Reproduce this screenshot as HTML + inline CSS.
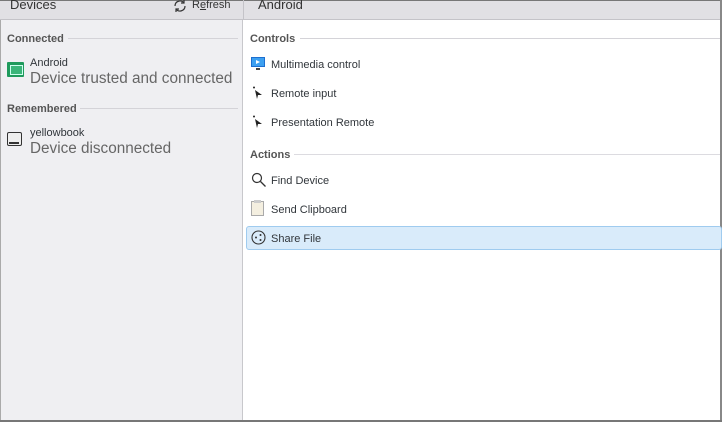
<!DOCTYPE html><html><head><style>
body{margin:0;width:722px;height:422px;overflow:hidden;font-family:"Liberation Sans","DejaVu Sans",sans-serif;color:#31363b;background:#fff;position:relative}
.a{position:absolute;white-space:nowrap}
.hdr{position:absolute;left:0;top:0;width:722px;height:20px;background:#e1e0e4;border-top:1px solid #777;border-bottom:1px solid #c4c3c8;box-sizing:border-box}
.left{position:absolute;left:0;top:20px;width:243px;height:402px;background:#efeff2;border-right:1px solid #c8c8cc;border-left:1px solid #aaa;box-sizing:border-box}
.sec{font-size:11px;font-weight:bold;color:#555}
.line{position:absolute;height:1px;background:#d4d3d8}
.it{font-size:11px;color:#31363b}
</style></head><body>
<div class="hdr"></div>
<div class="a" style="left:10px;top:-3px;font-size:13px;color:#333">Devices</div>
<svg class="a" style="left:173px;top:0" width="14" height="12" viewBox="0 0 14 12"><path d="M2 6a5 5 0 0 1 9-3M12 6a5 5 0 0 1-9 3" fill="none" stroke="#333" stroke-width="1.2"/><path d="M11 0v3h-3M3 12v-3h3" fill="none" stroke="#333" stroke-width="1.2"/></svg>
<div class="a" style="left:192px;top:-1px;font-size:11px;color:#333">R<u>e</u>fresh</div>
<div class="a" style="left:243px;top:0;width:1px;height:20px;background:#c4c3c8"></div>
<div class="a" style="left:258px;top:-3px;font-size:13px;color:#333">Android</div>
<div class="left"></div>
<div class="a" style="left:720px;top:0;width:2px;height:422px;background:#888"></div>
<div class="a" style="left:0;top:420px;width:722px;height:2px;background:#777"></div>
<div class="a sec" style="left:7px;top:33px">Connected</div>
<div class="line" style="left:68px;top:38px;width:170px"></div>
<div class="a" style="left:7px;top:62px;width:17px;height:15px;background:#1e9a5c;border-radius:1px"><div style="position:absolute;left:3px;top:3px;width:11px;height:8px;background:#39b579;border:1px solid #cfe"></div></div>
<div class="a it" style="left:30px;top:57px">Android</div>
<div class="a" style="left:30px;top:70px;font-size:15.3px;color:#666">Device trusted and connected</div>
<div class="a sec" style="left:7px;top:103px">Remembered</div>
<div class="line" style="left:80px;top:108px;width:158px"></div>
<div class="a" style="left:7px;top:132px;width:15px;height:14px;border:1.5px solid #333;border-radius:2px;box-sizing:border-box;background:#eee"><div style="position:absolute;left:1px;bottom:1px;width:10px;height:2px;background:#333"></div></div>
<div class="a it" style="left:30px;top:127px">yellowbook</div>
<div class="a" style="left:30px;top:140px;font-size:15.3px;color:#666">Device disconnected</div>

<div class="a sec" style="left:250px;top:33px">Controls</div>
<div class="line" style="left:300px;top:38px;width:420px"></div>
<svg class="a" style="left:250px;top:56px" width="16" height="16" viewBox="0 0 16 16"><rect x="1" y="1" width="14" height="10" fill="#1d6fd0"/><rect x="2" y="2" width="12" height="8" fill="#3da0f0"/><path d="M6 4l4 2-4 2z" fill="#fff"/><rect x="6" y="12" width="4" height="2" fill="#444"/></svg>
<div class="a it" style="left:271px;top:59px">Multimedia control</div>
<svg class="a" style="left:252px;top:86px" width="12" height="14"><circle cx="2" cy="1.5" r="1" fill="#222"/><path d="M3 4l7 5-4 0 -1 4z" fill="#222"/></svg>
<div class="a it" style="left:271px;top:88px">Remote input</div>
<svg class="a" style="left:252px;top:115px" width="12" height="14"><circle cx="2" cy="1.5" r="1" fill="#222"/><path d="M3 4l7 5-4 0 -1 4z" fill="#222"/></svg>
<div class="a it" style="left:271px;top:117px">Presentation Remote</div>
<div class="a sec" style="left:250px;top:149px">Actions</div>
<div class="line" style="left:294px;top:154px;width:426px;background:#dcdbe0"></div>
<svg class="a" style="left:251px;top:172px" width="16" height="16"><circle cx="6" cy="6" r="4.5" fill="none" stroke="#333" stroke-width="1.2"/><path d="M9.5 9.5l5 5" stroke="#333" stroke-width="1.3"/></svg>
<div class="a it" style="left:271px;top:175px">Find Device</div>
<div class="a" style="left:251px;top:201px;width:13px;height:15px;background:#f4efe0;border:1px solid #aaa;box-sizing:border-box"><div style="position:absolute;left:2px;top:-2px;width:7px;height:3px;background:#ccc"></div></div>
<div class="a it" style="left:271px;top:204px">Send Clipboard</div>
<div class="a" style="left:246px;top:226px;width:476px;height:24px;background:#d9ebfa;border:1px solid #9fcbef;border-radius:3px;box-sizing:border-box"></div>
<svg class="a" style="left:251px;top:230px" width="16" height="16"><circle cx="7.5" cy="7.5" r="6.5" fill="none" stroke="#333" stroke-width="1.1"/><circle cx="5" cy="7.5" r="1" fill="#333"/><circle cx="9.5" cy="5" r="1" fill="#333"/><circle cx="9.5" cy="10" r="1" fill="#333"/></svg>
<div class="a it" style="left:271px;top:233px">Share File</div>
</body></html>
